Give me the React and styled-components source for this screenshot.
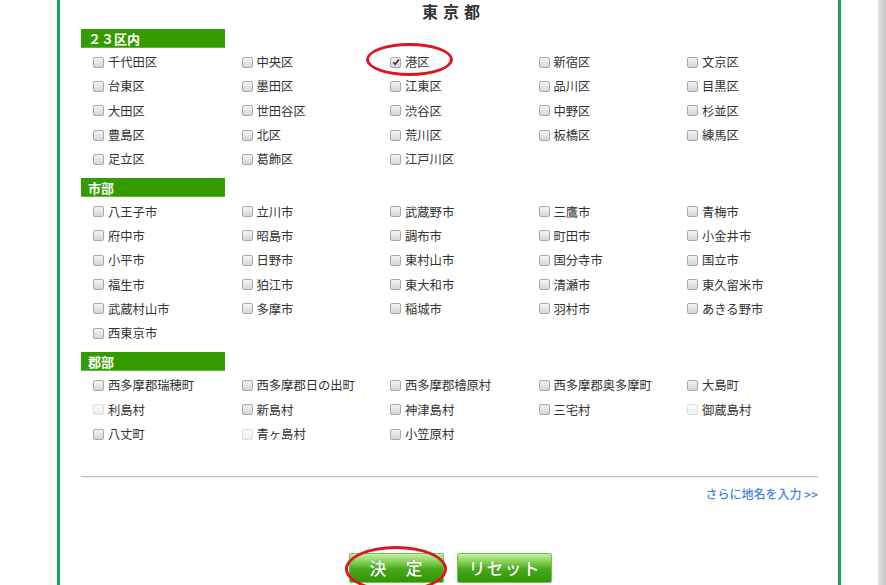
import React from "react";
import styled, { createGlobalStyle } from "styled-components";

const GlobalStyle = createGlobalStyle`
  html, body { margin: 0; padding: 0; background: #fff; }
  body {
    font-family: "Noto Sans CJK JP", "Noto Sans", "Liberation Sans", sans-serif;
    color: #333;
  }
`;

const Page = styled.div`
  display: flex;
  width: 886px;
  height: 585px;
  overflow: hidden;
  padding-left: 57px;
  box-sizing: border-box;
  background: #fff;
`;

const Panel = styled.div`
  width: 784px;
  box-sizing: border-box;
  border-left: 3px solid #17a463;
  border-right: 3px solid #17a463;
  padding: 0 20px 0 21px;
  display: flex;
  flex-direction: column;
  flex-shrink: 0;
`;

const ScrollShade = styled.div`
  margin-left: auto;
  width: 8px;
  height: 100%;
  background: linear-gradient(to right, #e4e4e4, #cfcfcf 60%, #c6c6c6);
`;

const Title = styled.h2`
  margin: 0;
  height: 20px;
  line-height: 22px;
  font-size: 16px;
  font-weight: 700;
  text-align: center;
  letter-spacing: 5px;
  padding-left: 8px;
  color: #333;
`;

const Section = styled.section`
  margin-top: 9px;
  & + & {
    margin-top: 7px;
  }
`;

const SectionHead = styled.div`
  width: 144px;
  height: 19px;
  line-height: 19px;
  box-sizing: border-box;
  padding-left: 7px;
  background: #339a00;
  border-bottom: 1px solid #5cb83a;
  color: #fff;
  font-weight: 700;
  font-size: 13px;
`;

const Grid = styled.div`
  margin-top: 2px;
  display: grid;
  grid-template-columns: repeat(5, 148.5px);
  grid-auto-rows: 24.3px;
`;

const Item = styled.label`
  position: relative;
  display: flex;
  align-items: center;
  gap: 4px;
  padding-left: 12px;
  font-size: 12.3px;
  color: #333;
  white-space: nowrap;
`;

const Box = styled.span`
  width: 11px;
  height: 11px;
  box-sizing: border-box;
  border-radius: 2px;
  border: 1px solid ${(p) => (p.$disabled ? "#dcdcdc" : "#a8a8a8")};
  background: ${(p) =>
    p.$disabled
      ? "linear-gradient(#fafafa, #efefef)"
      : "linear-gradient(#f4f4f4, #d6d6d6)"};
  display: flex;
  align-items: center;
  justify-content: center;
  flex-shrink: 0;
`;

const Ring = styled.span`
  position: absolute;
  left: ${(p) => p.$l}px;
  top: ${(p) => p.$t}px;
  width: ${(p) => p.$w}px;
  height: ${(p) => p.$h}px;
  border: 3.5px solid #dd1520;
  border-radius: 50%;
  box-sizing: border-box;
  pointer-events: none;
`;

const Divider = styled.hr`
  margin: 30px 0 0 0;
  border: none;
  border-top: 1px solid #c4c4c4;
  border-bottom: 1px solid #ececec;
  height: 0;
`;

const MoreLink = styled.a`
  margin-top: 8px;
  align-self: flex-end;
  font-size: 12px;
  line-height: 16px;
  color: #4a82d4;
  text-decoration: none;
  font-weight: 500;
`;

const Buttons = styled.div`
  margin-top: 51px;
  display: flex;
  justify-content: center;
  gap: 13px;
  padding-left: 2px;
`;

const BtnWrap = styled.div`
  position: relative;
`;

const Button = styled.button`
  width: 95px;
  height: 30px;
  border: 1px solid #74c24a;
  border-radius: 2px;
  background: linear-gradient(
    #c6eeaa 0%,
    #7fcf4e 30%,
    #46a81a 55%,
    #2f9606 100%
  );
  color: #fff;
  font-family: "Noto Sans CJK JP", sans-serif;
  font-size: 17px;
  font-weight: 500;
  letter-spacing: ${(p) => p.$ls || 1}px;
  padding: 0;
  line-height: 26px;
  text-shadow: 0 0 1px rgba(0, 60, 0, 0.4);
`;

const Check = () => (
  <svg width="8" height="8" viewBox="0 0 8 8">
    <path d="M1.2 4.2 L3.2 6.2 L6.9 1.4" fill="none" stroke="#333" strokeWidth="1.6" />
  </svg>
);

const sections = [
  {
    title: "２３区内",
    items: [
      "千代田区", "中央区", "港区", "新宿区", "文京区",
      "台東区", "墨田区", "江東区", "品川区", "目黒区",
      "大田区", "世田谷区", "渋谷区", "中野区", "杉並区",
      "豊島区", "北区", "荒川区", "板橋区", "練馬区",
      "足立区", "葛飾区", "江戸川区",
    ],
  },
  {
    title: "市部",
    items: [
      "八王子市", "立川市", "武蔵野市", "三鷹市", "青梅市",
      "府中市", "昭島市", "調布市", "町田市", "小金井市",
      "小平市", "日野市", "東村山市", "国分寺市", "国立市",
      "福生市", "狛江市", "東大和市", "清瀬市", "東久留米市",
      "武蔵村山市", "多摩市", "稲城市", "羽村市", "あきる野市",
      "西東京市",
    ],
  },
  {
    title: "郡部",
    items: [
      "西多摩郡瑞穂町", "西多摩郡日の出町", "西多摩郡檜原村", "西多摩郡奥多摩町", "大島町",
      "利島村", "新島村", "神津島村", "三宅村", "御蔵島村",
      "八丈町", "青ヶ島村", "小笠原村",
    ],
  },
];

const disabled = new Set(["利島村", "御蔵島村", "青ヶ島村"]);

export default function App() {
  return (
    <>
      <GlobalStyle />
      <Page>
        <Panel>
          <Title>東京都</Title>
          {sections.map((s) => (
            <Section key={s.title}>
              <SectionHead>{s.title}</SectionHead>
              <Grid>
                {s.items.map((name) => {
                  const checked = name === "港区";
                  return (
                    <Item key={name}>
                      <Box $disabled={disabled.has(name)}>{checked && <Check />}</Box>
                      {name}
                      {checked && <Ring $l={-12} $t={-7} $w={87} $h={33} />}
                    </Item>
                  );
                })}
              </Grid>
            </Section>
          ))}
          <Divider />
          <MoreLink href="#">さらに地名を入力 &gt;&gt;</MoreLink>
          <Buttons>
            <BtnWrap>
              <Button $ls={0}>決　定</Button>
              <Ring $l={-4} $t={-7} $w={102} $h={46} />
            </BtnWrap>
            <BtnWrap>
              <Button $ls={1}>リセット</Button>
            </BtnWrap>
          </Buttons>
        </Panel>
        <ScrollShade />
      </Page>
    </>
  );
}
